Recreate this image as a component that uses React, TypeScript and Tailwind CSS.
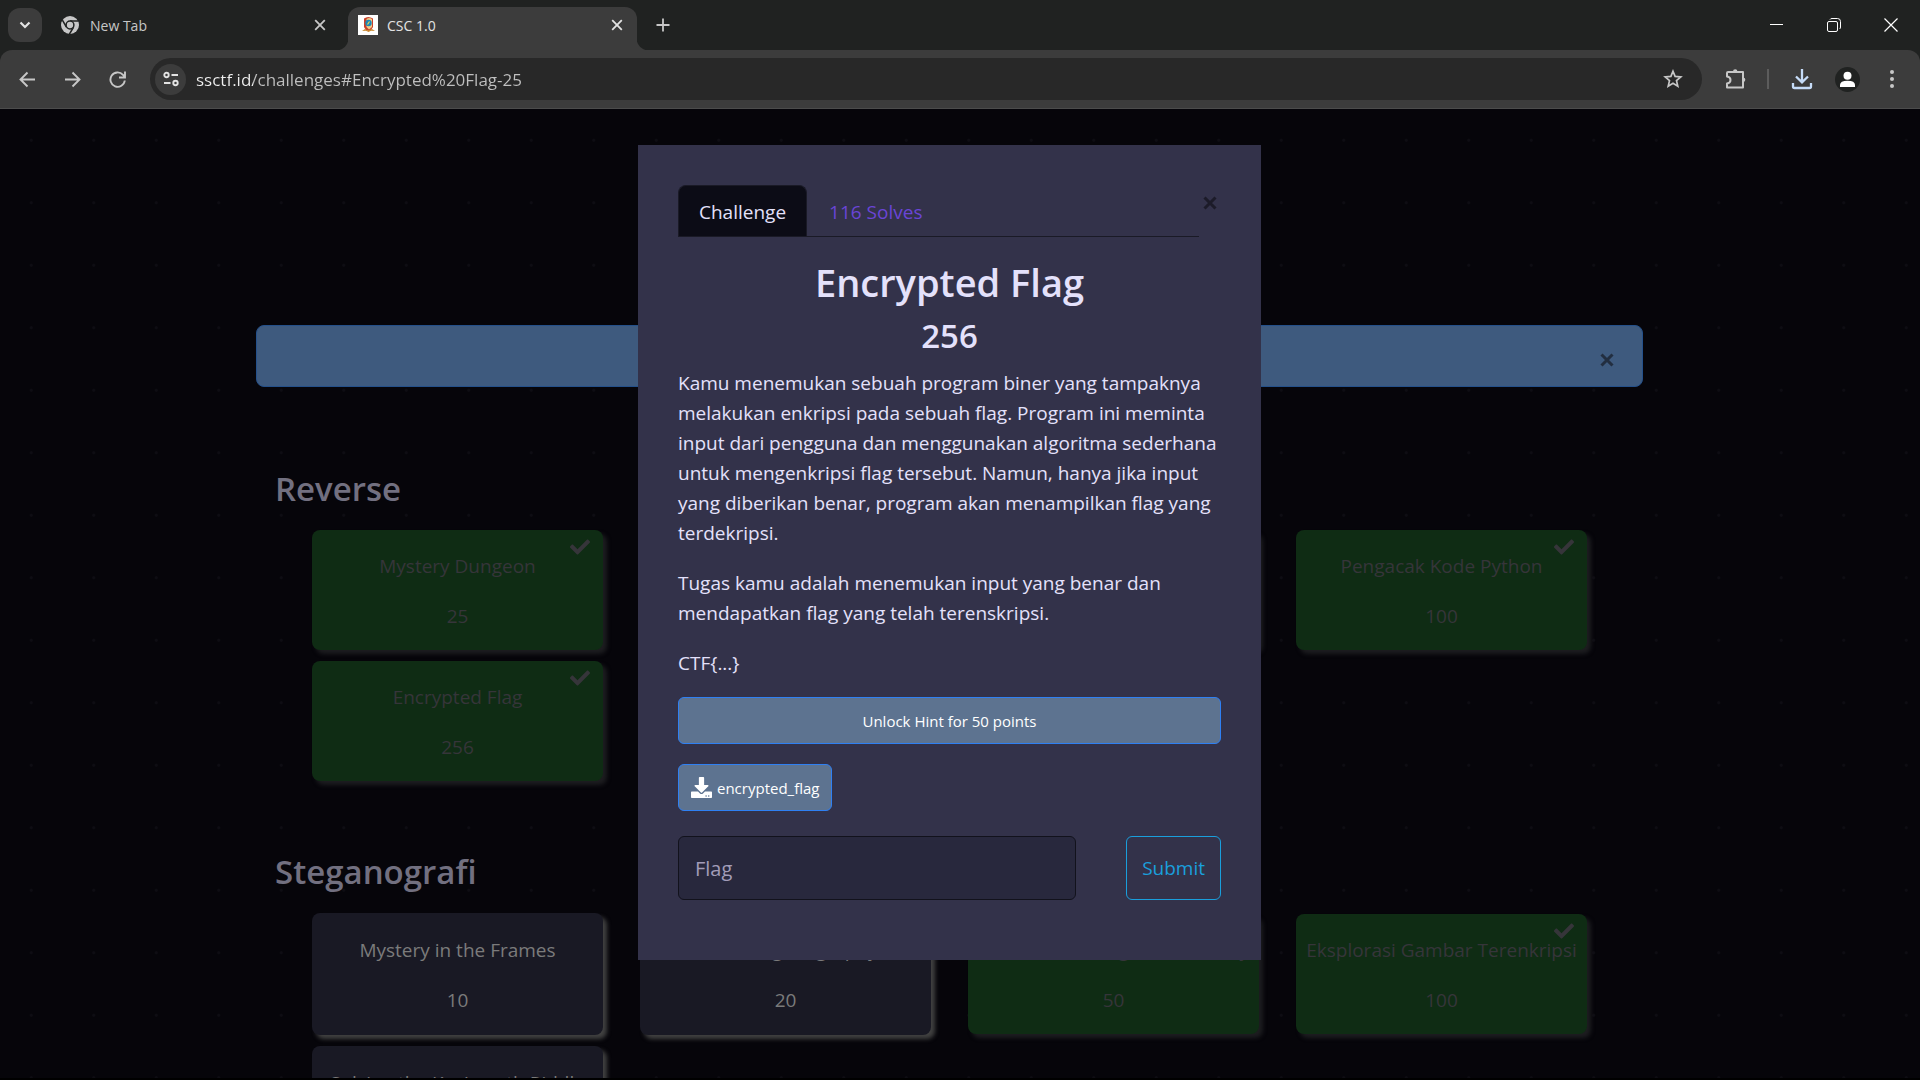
import React from "react";
import { FaCheck, FaDownload } from "react-icons/fa";

type Challenge = { name?: string; value?: number; solved: boolean };

const reverse: Challenge[] = [
  { name: "Mystery Dungeon", value: 25, solved: true },
  { solved: true },
  { solved: true },
  { name: "Pengacak Kode Python", value: 100, solved: true },
  { name: "Encrypted Flag", value: 256, solved: true },
];

const stegano: Challenge[] = [
  { name: "Mystery in the Frames", value: 10, solved: false },
  { name: "Basic Steganography", value: 20, solved: false },
  { name: "The Hidden Images in Memory", value: 50, solved: true },
  { name: "Eksplorasi Gambar Terenkripsi", value: 100, solved: true },
  { name: "Solving the KeyLength Riddle", value: 100, solved: false },
];

function CloseX({ className }: { className: string }) {
  return (
    <svg className={className} viewBox="0 0 14 14" fill="none" stroke="currentColor" strokeWidth="3" aria-hidden="true">
      <path d="M1.5 1.5 12.5 12.5M12.5 1.5 1.5 12.5" />
    </svg>
  );
}

function TabX() {
  return (
    <svg className="size-4" viewBox="0 0 16 16" fill="none" stroke="currentColor" strokeWidth="1.8" aria-hidden="true">
      <path d="M3.2 3.2 12.8 12.8M12.8 3.2 3.2 12.8" />
    </svg>
  );
}

function ChromeMark() {
  return (
    <svg className="size-[18px] shrink-0" viewBox="0 0 18 18" aria-hidden="true">
      <circle cx="9" cy="9" r="9" fill="#c7c7c7" />
      <path d="M9 4.9H17.5M5.4 11 1.4 4.2M12.6 11 8.4 18.2" stroke="#202221" strokeWidth="1.5" fill="none" />
      <circle cx="9" cy="9" r="3.9" fill="#c7c7c7" stroke="#202221" strokeWidth="1.5" />
    </svg>
  );
}

function SiteMark() {
  return (
    <svg className="size-5 shrink-0" viewBox="0 0 20 20" aria-hidden="true">
      <rect width="20" height="20" fill="#fff" />
      <path d="M6 3.500Q10 .5 15 3.500V12Q14 15 10.500 16 7 15 6 12Z" fill="#c9402b" />
      <path d="M8.500 4Q11 2 14 4V12L11 14.500 8.500 12Z" fill="#f0c987" />
      <circle cx="10.500" cy="8" r="3.200" fill="#1b87b8" />
      <path d="M9.500 9.500 11.500 6.500" stroke="#f3d34a" strokeWidth="1.200" />
      <path d="M4 16 7 14 10 15.500 14 14 17 16 13 15.800 10.500 17 8 15.800Z" fill="#c98a2e" />
    </svg>
  );
}

function Browser() {
  return (
    <header className="bg-[#202221] text-[#c7c7c7]">
      <div className="flex h-[50px] items-end">
        <div className="flex h-full w-[348px] items-center pl-2">
          <button aria-label="Search tabs" className="grid size-[34px] shrink-0 place-items-center rounded-xl bg-[#3c3c3c] text-[#e3e3e3]">
            <svg className="size-3" viewBox="0 0 12 12" fill="none" stroke="currentColor" strokeWidth="2.2">
              <path d="M1.500 3.500 6 8 10.500 3.500" />
            </svg>
          </button>
          <div className="ml-[19px] flex grow items-center pr-5">
            <ChromeMark />
            <span className="ml-[11px] grow text-[14px]">New Tab</span>
            <button aria-label="Close New Tab"><TabX /></button>
          </div>
        </div>
        <div className="relative flex h-[43px] w-[289px] items-center rounded-t-xl bg-[#3c3c3c] pr-3 pb-[7px] pl-[10px]">
          <span className="absolute bottom-0 -left-3 size-3 bg-[radial-gradient(circle_at_0_0,#202221_12px,#3c3c3c_13px)]" />
          <span className="absolute -right-3 bottom-0 size-3 bg-[radial-gradient(circle_at_100%_0,#202221_12px,#3c3c3c_13px)]" />
          <SiteMark />
          <span className="ml-[9px] grow text-[14px] text-[#e3e3e3]">CSC 1.0</span>
          <button aria-label="Close CSC 1.0" className="text-[#e3e3e3]"><TabX /></button>
        </div>
        <button aria-label="New tab" className="mb-[17px] ml-[18px]">
          <svg className="size-4" viewBox="0 0 16 16" fill="none" stroke="currentColor" strokeWidth="1.8">
            <path d="M8 1.500V14.500M1.500 8H14.500" />
          </svg>
        </button>
        <div className="mb-[18px] ml-auto flex items-center gap-[43px] pr-[22px] text-white">
          <button aria-label="Minimize">
            <svg className="size-[14px]" viewBox="0 0 14 14" fill="none" stroke="currentColor"><path d="M0 6.500H13" /></svg>
          </button>
          <button aria-label="Restore">
            <svg className="size-[14px]" viewBox="0 0 14 14" fill="none" stroke="currentColor">
              <rect x=".5" y="3.500" width="10" height="10" rx="1.500" />
              <path d="M3 1.500Q3.500.5 5 .5H10.500Q13.500.5 13.500 3.500V9Q13.500 10.500 12.500 11" />
            </svg>
          </button>
          <button aria-label="Close window">
            <svg className="size-[14px]" viewBox="0 0 14 14" fill="none" stroke="currentColor" strokeWidth="1.200"><path d="M.5.5 13.500 13.500M13.500.5.5 13.500" /></svg>
          </button>
        </div>
      </div>
      <div className="flex h-[59px] items-center rounded-t-xl border-b border-[#4c4c4c] bg-[#3c3c3c] pr-[18px] pl-[19px]">
        <button aria-label="Back">
          <svg className="size-[17px]" viewBox="0 0 17 17" fill="none" stroke="currentColor" strokeWidth="1.900"><path d="M16 8.500H2M8.500 1.500 1.500 8.500 8.500 15.500" /></svg>
        </button>
        <button aria-label="Forward" className="ml-7">
          <svg className="size-[17px]" viewBox="0 0 17 17" fill="none" stroke="currentColor" strokeWidth="1.900"><path d="M1 8.500H15M8.500 1.500 15.500 8.500 8.500 15.500" /></svg>
        </button>
        <button aria-label="Reload" className="ml-7">
          <svg className="size-[17px]" viewBox="0 0 17 17" fill="none" stroke="currentColor" strokeWidth="1.900"><path d="M15.800 9.500A7.200 7.200 0 1 1 14 3.800L16 6M16 .5V6.500H10" /></svg>
        </button>
        <div className="ml-6 flex h-[42px] grow items-center rounded-full bg-[#282828] pr-[19px] pl-[5px]">
          <button aria-label="Site information" className="grid size-[31px] place-items-center rounded-full bg-[#3c3c3c] text-[#e3e3e3]">
            <svg className="size-4" viewBox="0 0 16 16" fill="none" stroke="currentColor" strokeWidth="1.900">
              <circle cx="3.500" cy="4" r="2.200" /><path d="M8.500 4H15M1 12H7.500" /><circle cx="12.500" cy="12" r="2.200" />
            </svg>
          </button>
          <input
            aria-label="Address"
            className="ml-[10px] h-8 grow bg-[linear-gradient(90deg,#f0f0f0_57px,#c0c0c0_57px)] bg-clip-text text-[17px] text-transparent outline-none"
            defaultValue="ssctf.id/challenges#Encrypted%20Flag-25"
          />
          <button aria-label="Bookmark this tab">
            <svg className="size-5" viewBox="0 0 20 20" fill="none" stroke="currentColor" strokeWidth="1.700"><path d="M10 2.200 12.100 7.400 17.800 7.900 13.500 11.600 14.800 17.200 10 14.200 5.200 17.200 6.500 11.600 2.200 7.900 7.900 7.400Z" /></svg>
          </button>
        </div>
        <button aria-label="Extensions" className="ml-[23px]">
          <svg className="size-[22px]" viewBox="0 0 22 22">
            <path d="M3 4H18V19.500H2V15.500Q5.500 15 5.500 12T2 8.500V5Q2 4 3 4Z" fill="none" stroke="currentColor" strokeWidth="2" strokeLinejoin="round" />
            <path d="M8 3.500A2.200 2.200 0 0 1 12.400 3.500ZM18.500 9.500A2.300 2.300 0 0 1 18.500 14Z" fill="currentColor" />
          </svg>
        </button>
        <span className="ml-5 h-5 w-0.5 bg-[#5c5c5c]" />
        <button aria-label="Downloads" className="ml-[22px] text-[#c6dcf8]">
          <svg className="size-[22px]" viewBox="0 0 22 22" fill="none" stroke="currentColor" strokeWidth="2.300"><path d="M11 1V14M5 8.500 11 14.300 17 8.500M2 15V18.500Q2 20 3.500 20H18.500Q20 20 20 18.500V15" /></svg>
        </button>
        <button aria-label="Profile" className="ml-[22px]">
          <svg className="size-[25px]" viewBox="0 0 25 25"><circle cx="12.500" cy="12.500" r="12.500" fill="#202221" /><circle cx="12.500" cy="8.700" r="4" fill="#fff" /><path d="M5 20V18Q5 13.700 12.500 13.700T20 18V20Z" fill="#fff" /></svg>
        </button>
        <button aria-label="Menu" className="ml-[22px]">
          <svg className="size-5" viewBox="0 0 20 20" fill="currentColor"><circle cx="10" cy="3" r="2" /><circle cx="10" cy="10" r="2" /><circle cx="10" cy="17" r="2" /></svg>
        </button>
      </div>
    </header>
  );
}

function Card({ c }: { c: Challenge }) {
  return (
    <button
      className={
        c.solved
          ? "relative flex h-[120px] flex-col items-center gap-5 rounded-lg bg-[#0f2c14] px-2 pt-[21px] leading-[30px] text-[#36353a] shadow-[4px_4px_4px_#1d1d20]"
          : "relative flex h-[122px] flex-col items-center gap-5 rounded-lg bg-[#191924] px-2 pt-[22px] leading-[30px] text-[#7b7b7b] shadow-[4px_4px_4px_#414141]"
      }
    >
      {c.solved && <FaCheck className="absolute top-[7px] right-[13px] size-5" />}
      <span className="whitespace-nowrap">{c.name}</span>
      <span>{c.value}</span>
    </button>
  );
}

function Category({ title, items }: { title: string; items: Challenge[] }) {
  return (
    <section>
      <h3 className="pl-[19px] text-[33px] leading-[42px] font-semibold text-[#727080]">{title}</h3>
      <div className="mt-5 grid grid-cols-4 items-center gap-x-[37px] gap-y-[11px] px-14">
        {items.map((c, i) => <Card key={i} c={c} />)}
      </div>
    </section>
  );
}

function ChallengeDialog() {
  return (
    <div role="dialog" aria-modal="true" aria-labelledby="challenge-title" className="w-[623px] bg-[#33324a] px-10 pt-10 pb-[60px] text-[#e4e1fb]">
      <div className="flex items-start">
        <div role="tablist" className="flex grow border-b border-[#1a1a26]">
          <button role="tab" aria-selected="true" className="h-[51px] rounded-t-lg border border-b-0 border-[#1a1a26] bg-[#0c0c16] px-5 pt-0.5">Challenge</button>
          <button role="tab" aria-selected="false" className="h-[51px] px-[22px] pt-[3px] text-[#6a45d6]">116 Solves</button>
        </div>
        <button aria-label="Close" className="mt-[11px] mr-1 ml-1 text-[#1c1b29]"><CloseX className="size-[14px]" /></button>
      </div>
      <h2 id="challenge-title" className="mt-[18px] text-center text-[38px] leading-[54px] font-semibold">Encrypted Flag</h2>
      <h3 className="text-center text-[33px] leading-[54px] font-semibold">256</h3>
      <div className="mt-[5px] flex flex-col gap-5 leading-[30px] whitespace-nowrap">
        <p>
          Kamu menemukan sebuah program biner yang tampaknya<br />
          melakukan enkripsi pada sebuah flag. Program ini meminta<br />
          input dari pengguna dan menggunakan algoritma sederhana<br />
          untuk mengenkripsi flag tersebut. Namun, hanya jika input<br />
          yang diberikan benar, program akan menampilkan flag yang<br />
          terdekripsi.
        </p>
        <p>
          Tugas kamu adalah menemukan input yang benar dan<br />
          mendapatkan flag yang telah terenskripsi.
        </p>
        <p>CTF{"{...}"}</p>
      </div>
      <button className="mt-[19px] h-[47px] w-full rounded-md border border-[#2f80f3] bg-[#5d7390] pt-0.5 text-[15px] text-white">Unlock Hint for 50 points</button>
      <a href="#encrypted_flag" className="mt-5 flex h-[47px] w-fit items-center gap-[5px] rounded-md border border-[#2f80f3] bg-[#5d7390] px-3 text-[15px] text-white">
        <FaDownload className="size-[21px]" />
        <span className="pt-0.5">encrypted_flag</span>
      </a>
      <form className="mt-[25px] flex justify-between" onSubmit={(e) => e.preventDefault()}>
        <input aria-label="Flag" placeholder="Flag" className="h-16 w-[398px] rounded-md border border-[#12121c] bg-[#28283d] px-4 text-[20px] outline-none placeholder:text-[#a29cb8]" />
        <button className="h-16 rounded-md border border-[#1a9fdc] px-[15px] text-[#1a9fdc]">Submit</button>
      </form>
    </div>
  );
}

export default function App() {
  return (
    <div className="flex h-screen flex-col overflow-hidden bg-black font-['Open_Sans','Noto_Sans',sans-serif] text-[19px]">
      <Browser />
      <div className="relative mb-0.5 grow overflow-hidden bg-[#06050a] bg-[radial-gradient(circle_at_25%_25%,#0e0d13_1px,transparent_2px),radial-gradient(circle_at_75%_25%,#0e0d13_1px,transparent_2px),radial-gradient(circle_at_25%_75%,#0e0d13_1px,transparent_2px),radial-gradient(circle_at_75%_75%,#0e0d13_1px,transparent_2px)] bg-size-[125px_125px]">
        <main className="mr-[21px] flex justify-center pt-[216px]">
          <div className="w-full max-w-[1387px]">
            <div role="alert" className="flex h-[62px] items-center justify-end rounded-lg border border-[#24508a] bg-[#3e5a7e] pt-[7px] pr-7">
              <button aria-label="Dismiss" className="text-[#222e40]"><CloseX className="size-[14px]" /></button>
            </div>
            <div className="mt-[81px] flex flex-col gap-[70px]">
              <Category title="Reverse" items={reverse} />
              <Category title="Steganografi" items={stegano} />
            </div>
          </div>
        </main>
        <div className="absolute inset-0 flex items-start justify-center pt-9 pr-[21px]">
          <ChallengeDialog />
        </div>
      </div>
    </div>
  );
}
